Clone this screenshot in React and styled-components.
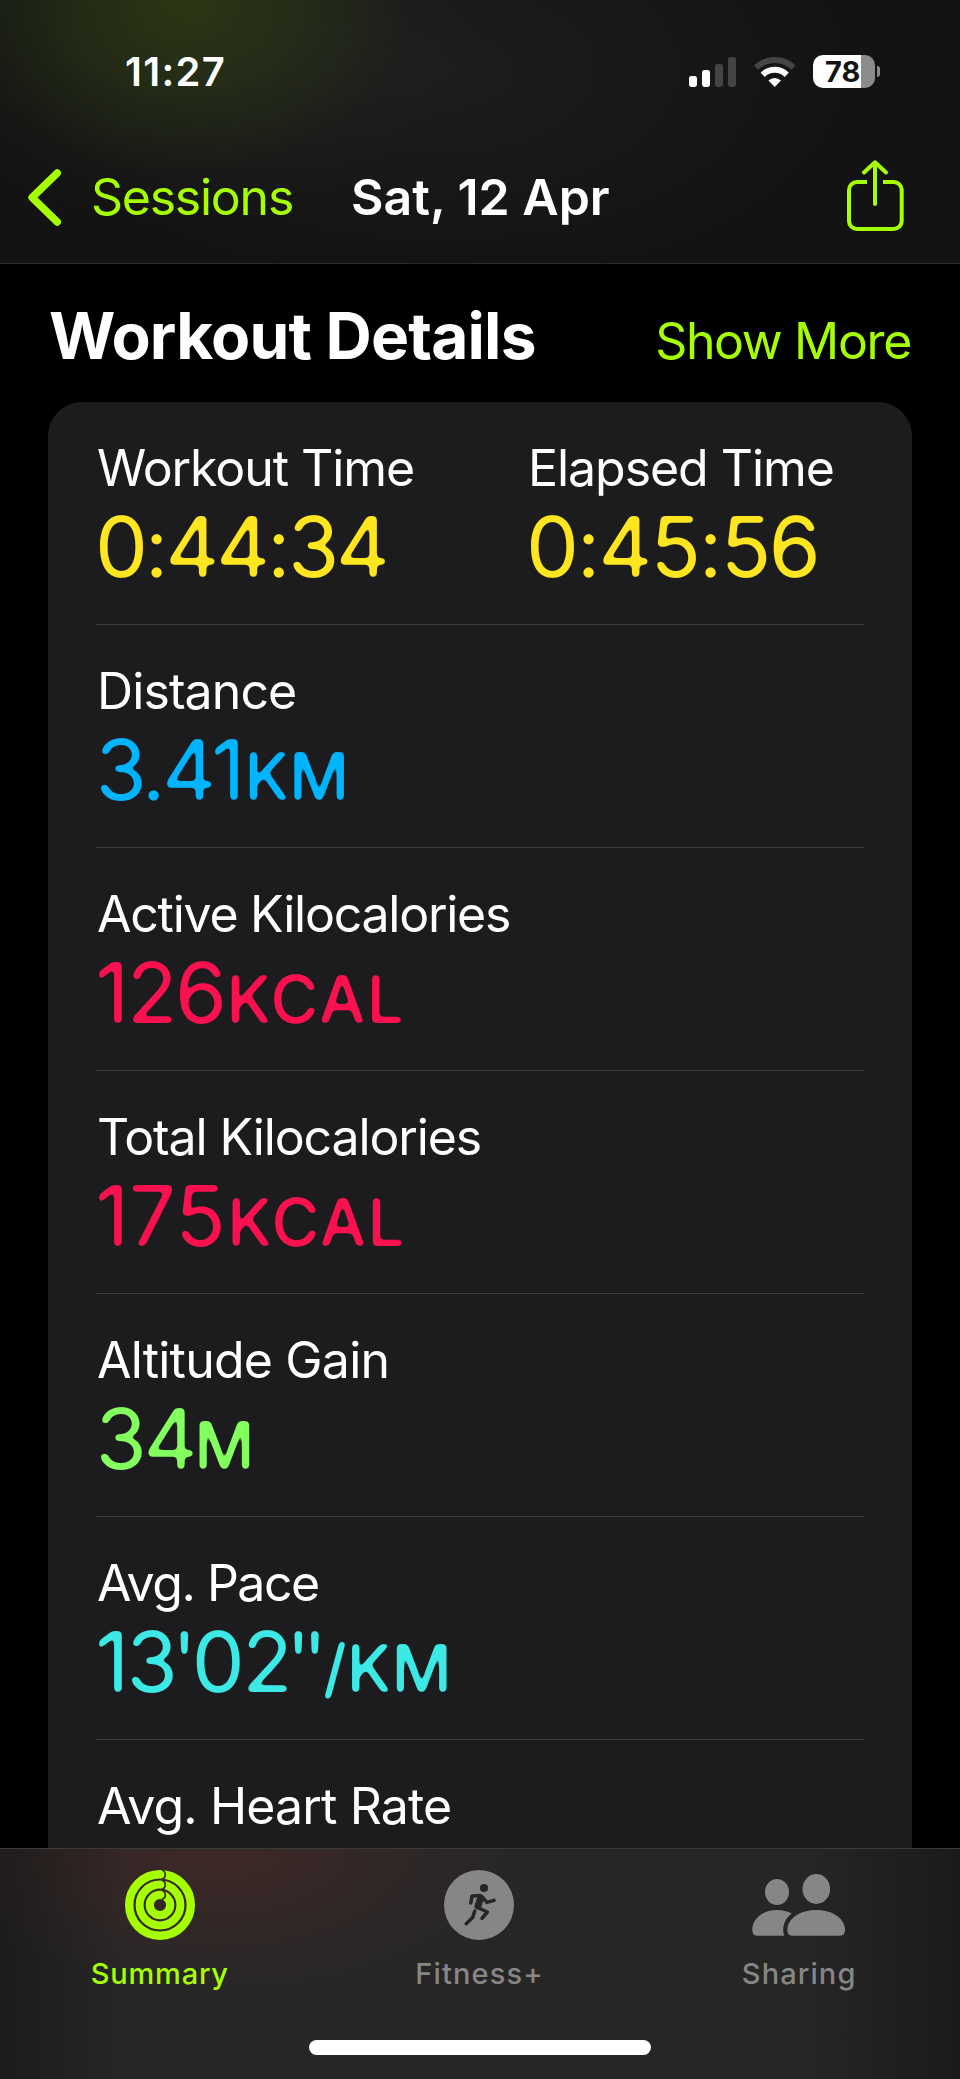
import React from "react";
import styled, { createGlobalStyle } from "styled-components";

const LIME = "#a6ff00";

const GlobalStyle = createGlobalStyle`
  * { box-sizing: border-box; }
  body { margin: 0; background: #000; }
`;

const Screen = styled.div`
  width: 960px;
  height: 2079px;
  display: flex;
  flex-direction: column;
  overflow: hidden;
  background: #000;
  color: #fff;
  font-family: Inter, "Liberation Sans", sans-serif;
  font-size: 50px;
  white-space: nowrap;
`;

const Header = styled.header`
  flex: none;
  height: 264px;
  border-bottom: 1px solid #2a2a2b;
  background:
    radial-gradient(ellipse 290px 220px at 180px 0, rgba(68, 92, 18, 0.46), rgba(62, 84, 24, 0.32) 42%, rgba(50, 60, 35, 0.1) 78%, transparent),
    radial-gradient(ellipse 420px 220px at 440px 70px, rgba(255, 255, 255, 0.045), transparent),
    #131313;
`;

const StatusBar = styled.div`
  height: 143px;
  padding: 0 80px 0 125px;
  display: flex;
  align-items: center;
`;

const Clock = styled.time`
  flex: 1;
  font-size: 40px;
  font-weight: 600;
  letter-spacing: 1.3px;
`;

const StatusIcons = styled.div`
  display: flex;
  align-items: center;
  gap: 17px;
`;

const Battery = styled.div`
  display: flex;
  align-items: center;
  gap: 2px;
`;

const BatteryBody = styled.div`
  width: 62px;
  height: 33px;
  padding-left: 12px;
  border-radius: 10px;
  background: linear-gradient(90deg, #fff 48px, #8b8b8b 48px);
  color: #141414;
  font-size: 29px;
  font-weight: 700;
  line-height: 33px;
`;

const BatteryTip = styled.div`
  width: 3px;
  height: 11px;
  border-radius: 0 5px 5px 0;
  background: #8b8b8b;
`;

const NavBar = styled.nav`
  height: 108px;
  padding: 0 56px 0 28px;
  display: grid;
  grid-template-columns: 323px 1fr auto;
  align-items: center;
`;

const BackLink = styled.a`
  display: flex;
  align-items: center;
  gap: 29px;
  color: ${LIME};
  letter-spacing: -1.25px;
`;

const NavTitle = styled.h1`
  margin: 0;
  font-size: 50px;
  font-weight: 600;
  letter-spacing: 0;
`;

const ShareButton = styled.a`
  display: flex;
  padding-bottom: 3px;
`;

const Content = styled.main`
  flex: 1;
  min-height: 0;
  overflow: hidden;
  padding: 0 48px;
`;

const SectionHead = styled.div`
  height: 138px;
  padding: 40px 0 0 1px;
  display: flex;
  align-items: baseline;
  justify-content: space-between;
`;

const SectionTitle = styled.h2`
  margin: 0;
  font-size: 64px;
  line-height: 64px;
  font-weight: 700;
  letter-spacing: -0.8px;
`;

const ShowMore = styled.a`
  margin-right: 1px;
  color: ${LIME};
  line-height: 52px;
  letter-spacing: -1.35px;
`;

const Card = styled.section`
  padding: 0 48px;
  border-radius: 34px 34px 0 0;
  background: #1c1c1e;
`;

const Row = styled.div`
  height: 223px;
  padding-top: 40px;
  display: grid;
  grid-template-columns: 431px 1fr;
  border-bottom: 1px solid #3b3b3d;
`;

const Label = styled.div`
  padding-left: 1px;
  line-height: 52px;
  letter-spacing: ${(p) => p.$track}px;
`;

const Value = styled.div`
  margin: 11px 0 0 -1px;
  color: ${(p) => p.$color};
  font-size: 84px;
  line-height: 84px;
  letter-spacing: ${(p) => p.$track}px;
  filter: url(#soft-corners);
`;

const Quote = styled.span`
  margin-left: ${(p) => p.$gap}px;
  letter-spacing: ${(p) => p.$track}px;
`;

const Unit = styled.span`
  margin-left: ${(p) => p.$gap}px;
  font-size: 66px;
  font-weight: 500;
  letter-spacing: ${(p) => p.$track}px;
`;

const TabBar = styled.footer`
  flex: none;
  height: 231px;
  border-top: 1px solid #3a3a3b;
  background:
    linear-gradient(90deg, rgba(0, 0, 0, 0.28), transparent 130px, transparent 800px, rgba(0, 0, 0, 0.3)),
    radial-gradient(ellipse 300px 150px at 220px 0, rgba(105, 45, 38, 0.36), transparent),
    #262627;
`;

const Tabs = styled.div`
  height: 191px;
  padding-right: 1px;
  display: grid;
  grid-template-columns: repeat(3, 1fr);
`;

const Tab = styled.a`
  display: flex;
  flex-direction: column;
  align-items: center;
  padding-top: 21px;
  color: ${(p) => (p.$active ? LIME : "#868686")};
  font-size: 29px;
  font-weight: 500;
  line-height: 36px;
  letter-spacing: ${(p) => p.$track}px;
`;

const TabIcon = styled.div`
  height: 70px;
  margin-bottom: 16px;
  display: flex;
  align-items: center;
`;

const HomeIndicator = styled.div`
  width: 342px;
  height: 15px;
  margin: 0 auto;
  border-radius: 8px;
  background: #fff;
`;

const HiddenDefs = styled.svg`
  position: absolute;
  width: 0;
  height: 0;
`;

// Rounds the stroke ends of the large numerals.
const Filters = () => (
  <HiddenDefs aria-hidden="true">
    <filter id="soft-corners" colorInterpolationFilters="sRGB">
      <feGaussianBlur stdDeviation="2" />
      <feComponentTransfer>
        <feFuncA type="linear" slope="5.5" intercept="-2.25" />
      </feComponentTransfer>
    </filter>
  </HiddenDefs>
);

const SignalIcon = () => (
  <svg width="48" height="30" viewBox="0 0 48 30">
    <rect x="0" y="19" width="8" height="11" rx="2.4" fill="#fff" />
    <rect x="13" y="13" width="8" height="17" rx="2.4" fill="#fff" />
    <rect x="26" y="7" width="8" height="23" rx="2.4" fill="#444" />
    <rect x="39" y="0" width="8" height="30" rx="2.4" fill="#444" />
  </svg>
);

const WifiIcon = () => (
  <svg width="42" height="30" viewBox="0 0 42 30" fill="none">
    <path d="M1.95 10.6A27 27 0 0 1 39.45 10.6" stroke="#444" strokeWidth="6" />
    <path d="M8.7 17.8A17 17 0 0 1 32.7 17.8" stroke="#fff" strokeWidth="6" />
    <path d="M20.7 30L14.4 23.6A9 9 0 0 1 27 23.6Z" fill="#fff" />
  </svg>
);

const BackIcon = () => (
  <svg width="34" height="57" viewBox="0 0 34 57" fill="none" stroke={LIME} strokeWidth="7.4" strokeLinecap="round" strokeLinejoin="round">
    <path d="M29.3 4L4.1 28.5L29.3 53" />
  </svg>
);

const ShareIcon = () => (
  <svg width="57" height="71" viewBox="0 0 57 71" fill="none" stroke={LIME} strokeWidth="4">
    <path d="M20 22H10A8 8 0 0 0 2 30V61A8 8 0 0 0 10 69H46.7A8 8 0 0 0 54.7 61V30A8 8 0 0 0 46.7 22H36" />
    <path d="M28 3V44M17 12.5L28 2.3L39 12.5" strokeLinecap="round" strokeLinejoin="round" />
  </svg>
);

const RingsIcon = () => (
  <svg width="70" height="70" viewBox="0 0 70 70" fill="none">
    <g stroke={LIME}>
      <circle cx="35" cy="35" r="30.8" strokeWidth="8.4" />
      <circle cx="35" cy="35" r="20.4" strokeWidth="8" />
      <circle cx="35" cy="35" r="10.2" strokeWidth="8.2" />
    </g>
    <g stroke="#35292a" strokeWidth="1.6">
      <path d="M37 -.5C41.5 2 41.5 7.5 37 9.5" />
      <path d="M37 10C41.5 12 41.5 17.6 37 19.6" />
      <path d="M37 20C41.5 22.4 41.5 27.6 37 29.4" />
    </g>
  </svg>
);

const RunnerIcon = () => (
  <svg width="70" height="70" viewBox="0 0 70 70" fill="none">
    <circle cx="35" cy="35" r="35" fill="#868686" />
    <circle cx="40" cy="18" r="4.1" fill="#262627" />
    <g stroke="#262627" strokeWidth="3.5" strokeLinecap="round" strokeLinejoin="round">
      <path d="M26.8 33L28 26L36 25.6L38.5 27L42.8 32.4L50 30.4" />
      <path d="M36.5 28.5L34 36" strokeWidth="7" />
      <path d="M33.5 37.5L43.4 42L38 48.3" />
      <path d="M30.8 41L28.6 47.6L22.2 53.8" />
    </g>
  </svg>
);

const PeopleIcon = () => (
  <svg width="94" height="62" viewBox="0 0 94 62" fill="#868686">
    <ellipse cx="25" cy="18" rx="12" ry="13" />
    <ellipse cx="64.3" cy="15" rx="13.8" ry="15" />
    <path d="M.3 56C.3 45 10 36 25 36C31 36 36 37.3 39.7 39.6C34 44 31.2 50 31.2 56Q31.2 59 32.2 61.7H5Q.3 61.7 .3 56Z" />
    <path d="M35.3 56C35.3 46 46 36 64.3 36S93 46 93 56Q93 61.7 88 61.7H40Q35.3 61.7 35.3 56Z" />
  </svg>
);

const Metric = ({ label, labelTrack, color, track, unit, unitTrack, unitGap, children }) => (
  <div>
    <Label $track={labelTrack}>{label}</Label>
    {children && (
      <Value $color={color} $track={track}>
        {children}
        {unit && <Unit $track={unitTrack} $gap={unitGap}>{unit}</Unit>}
      </Value>
    )}
  </div>
);

export default function App() {
  return (
    <Screen>
      <GlobalStyle />
      <Filters />
      <Header>
        <StatusBar>
          <Clock>11:27</Clock>
          <StatusIcons>
            <SignalIcon />
            <WifiIcon />
            <Battery>
              <BatteryBody>78</BatteryBody>
              <BatteryTip />
            </Battery>
          </StatusIcons>
        </StatusBar>
        <NavBar>
          <BackLink>
            <BackIcon />
            <span>Sessions</span>
          </BackLink>
          <NavTitle>Sat, 12 Apr</NavTitle>
          <ShareButton>
            <ShareIcon />
          </ShareButton>
        </NavBar>
      </Header>
      <Content>
        <SectionHead>
          <SectionTitle>Workout Details</SectionTitle>
          <ShowMore>Show More</ShowMore>
        </SectionHead>
        <Card>
          <Row>
            <Metric label="Workout Time" labelTrack={-1.08} color="#ffe620" track={-3.5}>0:44:34</Metric>
            <Metric label="Elapsed Time" labelTrack={-1.05} color="#ffe620" track={-2.5}>0:45:56</Metric>
          </Row>
          <Row>
            <Metric label="Distance" labelTrack={-0.9} color="#00b4ff" track={-3.6} unit="KM" unitTrack={-1} unitGap={3}>3.41</Metric>
          </Row>
          <Row>
            <Metric label="Active Kilocalories" labelTrack={-1.25} color="#fa114f" track={-2.7} unit="KCAL" unitTrack={1.2} unitGap={2}>126</Metric>
          </Row>
          <Row>
            <Metric label="Total Kilocalories" labelTrack={-1.12} color="#fa114f" track={-0.6} unit="KCAL" unitTrack={1.2} unitGap={2}>175</Metric>
          </Row>
          <Row>
            <Metric label="Altitude Gain" labelTrack={-0.8} color="#83ff5f" track={-3.4} unit="M" unitTrack={0} unitGap={0}>34</Metric>
          </Row>
          <Row>
            <Metric label="Avg. Pace" labelTrack={-1.49} color="#3ce9e5" track={-3.2} unit="/KM" unitTrack={-0.5} unitGap={4}>
              13<Quote $gap={-3} $track={-5}>'</Quote>02<Quote $gap={-4} $track={-8.6}>''</Quote>
            </Metric>
          </Row>
          <Row>
            <Metric label="Avg. Heart Rate" labelTrack={-0.87} />
          </Row>
        </Card>
      </Content>
      <TabBar>
        <Tabs>
          <Tab $active $track={0.78}>
            <TabIcon><RingsIcon /></TabIcon>
            Summary
          </Tab>
          <Tab $track={1.15}>
            <TabIcon><RunnerIcon /></TabIcon>
            Fitness+
          </Tab>
          <Tab $track={1.09}>
            <TabIcon><PeopleIcon /></TabIcon>
            Sharing
          </Tab>
        </Tabs>
        <HomeIndicator />
      </TabBar>
    </Screen>
  );
}
